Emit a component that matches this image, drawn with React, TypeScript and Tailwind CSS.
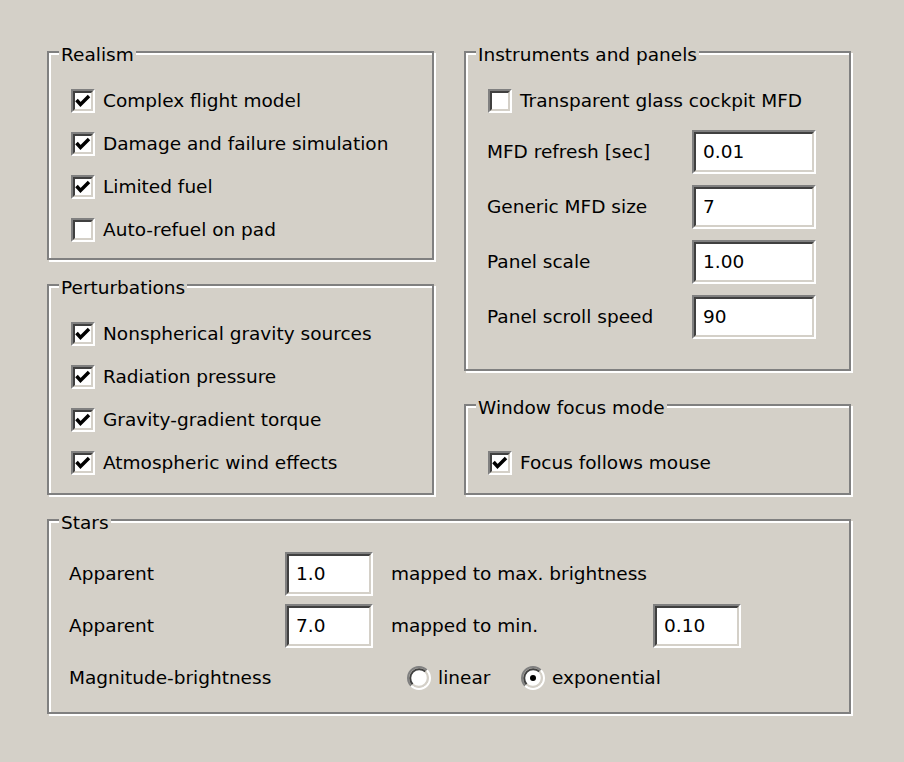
import React from "react";

const Box = ({
  title,
  className,
  children,
}: {
  title: string;
  className: string;
  children?: React.ReactNode;
}) => (
  <div
    className={`relative border-2 border-[#808080] shadow-[inset_2px_2px_0_#fff,2px_2px_0_#fff] ${className}`}
  >
    <span className="absolute left-[10px] top-[-9px] bg-[#d4d0c8] px-[2px] leading-[22px] whitespace-nowrap">
      {title}
    </span>
    {children}
  </div>
);

const Check = ({ checked }: { checked?: boolean }) => (
  <span className="flex w-6 h-6 shrink-0 border-2 border-t-[#808080] border-l-[#808080] border-b-white border-r-white">
    <span className="flex-1 border-2 border-t-[#404040] border-l-[#404040] border-b-[#d4d0c8] border-r-[#d4d0c8] bg-white">
      {checked && (
        <svg width="16" height="16" viewBox="0 0 16 16" className="block">
          <polyline
            points="1.5,7 5.5,11.5 14,3"
            fill="none"
            stroke="#000"
            strokeWidth="3.5"
            strokeLinecap="butt"
            strokeLinejoin="miter"
          />
        </svg>
      )}
    </span>
  </span>
);

const CheckRow = ({ label, checked }: { label: string; checked?: boolean }) => (
  <div className="flex items-center gap-[8px] h-[43px]">
    <Check checked={checked} />
    <span className="whitespace-nowrap">{label}</span>
  </div>
);

const Field = ({ value, w }: { value: string; w: string }) => (
  <div
    className={`h-[44px] ${w} shrink-0 border-2 border-t-[#808080] border-l-[#808080] border-b-white border-r-white`}
  >
    <div className="h-full border-2 border-t-[#404040] border-l-[#404040] border-b-[#d4d0c8] border-r-[#d4d0c8] bg-white flex items-center pl-[7px]">
      {value}
    </div>
  </div>
);

const Radio = ({ on }: { on?: boolean }) => (
  <svg width="24" height="24" viewBox="0 0 24 24" className="shrink-0">
    <circle cx="12" cy="12" r="9" fill="#fff" />
    <path d="M4.22 19.78 A11 11 0 0 1 19.78 4.22" fill="none" stroke="#808080" strokeWidth="2" />
    <path d="M19.78 4.22 A11 11 0 0 1 4.22 19.78" fill="none" stroke="#fff" strokeWidth="2" />
    <path d="M5.64 18.36 A9 9 0 0 1 18.36 5.64" fill="none" stroke="#404040" strokeWidth="2" />
    <path d="M18.36 5.64 A9 9 0 0 1 5.64 18.36" fill="none" stroke="#d4d0c8" strokeWidth="2" />
    {on && <circle cx="12" cy="12" r="3" fill="#000" />}
  </svg>
);

const InputRow = ({ label, value }: { label: string; value: string }) => (
  <div className="flex items-center h-[44px]">
    <span className="w-[205px]">{label}</span>
    <Field value={value} w="w-[124px]" />
  </div>
);

export default function App() {
  return (
    <div className="w-[904px] h-[762px] bg-[#d4d0c8] pt-[51px] pl-[47px] font-['DejaVu_Sans',sans-serif] text-[18.5px] leading-[22px] text-black">
      <div className="flex gap-[30px]">
        <div className="w-[387px] flex flex-col gap-[24px]">
          <Box title="Realism" className="h-[209px] pt-[26px] pl-[22px]">
            <CheckRow label="Complex flight model" checked />
            <CheckRow label="Damage and failure simulation" checked />
            <CheckRow label="Limited fuel" checked />
            <CheckRow label="Auto-refuel on pad" />
          </Box>
          <Box title="Perturbations" className="h-[211px] pt-[26px] pl-[22px]">
            <CheckRow label="Nonspherical gravity sources" checked />
            <CheckRow label="Radiation pressure" checked />
            <CheckRow label="Gravity-gradient torque" checked />
            <CheckRow label="Atmospheric wind effects" checked />
          </Box>
        </div>
        <div className="w-[387px] flex flex-col gap-[33px]">
          <Box title="Instruments and panels" className="h-[320px] pt-[26px]">
            <div className="pl-[22px]">
              <CheckRow label="Transparent glass cockpit MFD" />
            </div>
            <div className="mt-[8px] pl-[21px] flex flex-col gap-[11px]">
              <InputRow label="MFD refresh [sec]" value="0.01" />
              <InputRow label="Generic MFD size" value="7" />
              <InputRow label="Panel scale" value="1.00" />
              <InputRow label="Panel scroll speed" value="90" />
            </div>
          </Box>
          <Box title="Window focus mode" className="h-[91px] pt-[35px] pl-[22px]">
            <CheckRow label="Focus follows mouse" checked />
          </Box>
        </div>
      </div>
      <Box title="Stars" className="mt-[24px] w-[804px] h-[195px] pt-[31px] pl-[20px]">
        <div className="flex flex-col gap-[8px]">
          <div className="flex items-center h-[44px]">
            <span className="w-[216px]">Apparent</span>
            <Field value="1.0" w="w-[88px]" />
            <span className="ml-[18px]">mapped to max. brightness</span>
          </div>
          <div className="flex items-center h-[44px]">
            <span className="w-[216px]">Apparent</span>
            <Field value="7.0" w="w-[88px]" />
            <span className="ml-[18px] w-[262px]">mapped to min.</span>
            <Field value="0.10" w="w-[88px]" />
          </div>
          <div className="flex items-center h-[44px]">
            <span className="w-[338px]">Magnitude-brightness</span>
            <div className="flex items-center gap-[7px] w-[114px]">
              <Radio />
              <span>linear</span>
            </div>
            <div className="flex items-center gap-[7px]">
              <Radio on />
              <span>exponential</span>
            </div>
          </div>
        </div>
      </Box>
    </div>
  );
}
